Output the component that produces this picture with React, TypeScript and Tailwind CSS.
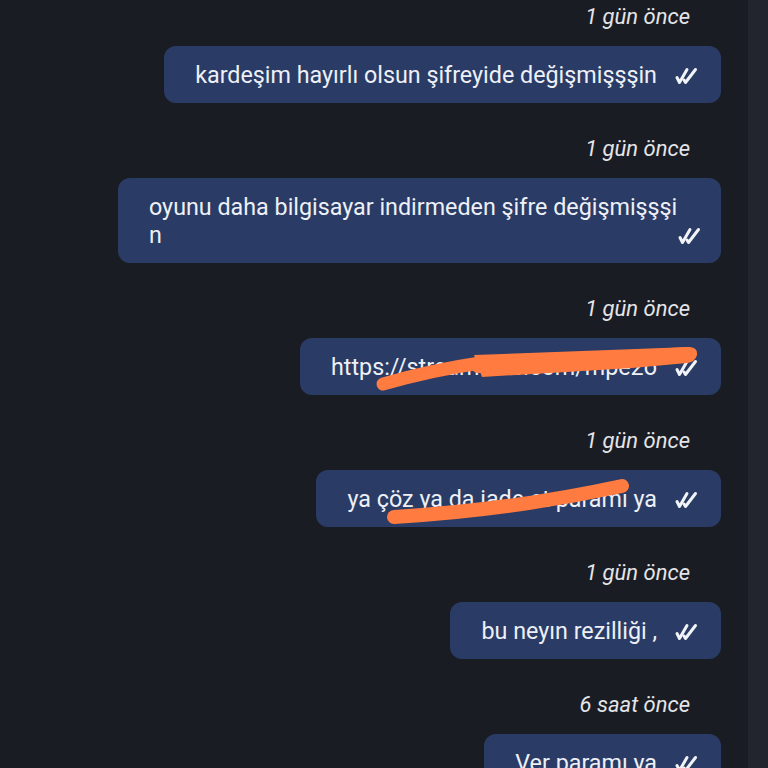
import React from "react";

const Check = () => (
  <svg width="24" height="18" viewBox="0 0 24 18" className="shrink-0">
    <path d="M3 10.5 L5.5 15.5 L13 2.5" fill="none" stroke="#f2f3f7" strokeWidth="3" strokeLinecap="round" strokeLinejoin="round" />
    <path d="M10 13 L11.5 15.5 L21.5 2.5" fill="none" stroke="#f2f3f7" strokeWidth="3" strokeLinecap="round" strokeLinejoin="round" />
  </svg>
);

const Stamp = ({ children }: { children: React.ReactNode }) => (
  <div className="self-end pr-[31px] pt-[1px] italic text-[22px] leading-[24px] text-[#e4e5e8]">{children}</div>
);

const Bubble = ({ children, overlay }: { children: React.ReactNode; overlay?: React.ReactNode }) => (
  <div className="relative self-end flex items-end rounded-[12px] bg-[#2a3c66] pl-[31px] pr-[23px] pt-[15px] pb-[14px] text-[23.3px] leading-[28px] text-[#eef0f6]">
    <span className="whitespace-nowrap">{children}</span>
    <span className="ml-[17px] mb-[4px]">
      <Check />
    </span>
    {overlay}
  </div>
);

const Group = ({ stamp, children }: { stamp: string; children: React.ReactNode }) => (
  <div className="flex flex-col gap-[17px] mb-[33px]">
    <Stamp>{stamp}</Stamp>
    {children}
  </div>
);

export default function App() {
  return (
    <div className="flex h-[768px] w-[768px] overflow-hidden bg-[#1a1c23]" style={{ fontFamily: "Roboto, 'Noto Sans', sans-serif" }}>
      <div className="flex flex-1 flex-col pt-[4px] pr-[27px]">
        <Group stamp="1 gün önce">
          <Bubble>kardeşim hayırlı olsun şifreyide değişmişşşin</Bubble>
        </Group>
        <Group stamp="1 gün önce">
          <div className="relative self-end flex items-end rounded-[12px] bg-[#2a3c66] pl-[31px] pr-[23px] pt-[15px] pb-[14px] text-[23.3px] leading-[28px] text-[#eef0f6] w-[603px]">
            <span className="flex-1 whitespace-nowrap">
              oyunu daha bilgisayar indirmeden şifre değişmişşşi
              <br />n
            </span>
            <span className="mb-[4px]">
              <Check />
            </span>
          </div>
        </Group>
        <Group stamp="1 gün önce">
          <Bubble
            overlay={
              <svg className="absolute right-0 top-0" width="419" height="58" viewBox="0 0 419 58">
                <path d="M81 46 Q130 32 178 25" fill="none" stroke="#ff7b3f" strokeWidth="13" strokeLinecap="round" />
                <path d="M172 17 L388 9 Q396 10 395 17 Q393 24 385 25 L330 30 L180 39 Z" fill="#ff7b3f" />
                <path d="M176 28 L385 16" fill="none" stroke="#ff7b3f" strokeWidth="14" strokeLinecap="round" />
              </svg>
            }
          >
            https://streamable.com/mpe2o
          </Bubble>
        </Group>
        <Group stamp="1 gün önce">
          <Bubble
            overlay={
              <svg className="absolute right-0 top-0" width="405" height="58" viewBox="0 0 405 58">
                <path d="M78 47 Q195 40 306 16" fill="none" stroke="#ff7b3f" strokeWidth="14" strokeLinecap="round" />
              </svg>
            }
          >
            ya çöz ya da iade et paramı ya
          </Bubble>
        </Group>
        <Group stamp="1 gün önce">
          <Bubble>bu neyın rezilliği ,</Bubble>
        </Group>
        <Group stamp="6 saat önce">
          <Bubble>Ver paramı ya</Bubble>
        </Group>
      </div>
      <div className="w-[20px] shrink-0 bg-[#22252d]" />
    </div>
  );
}
